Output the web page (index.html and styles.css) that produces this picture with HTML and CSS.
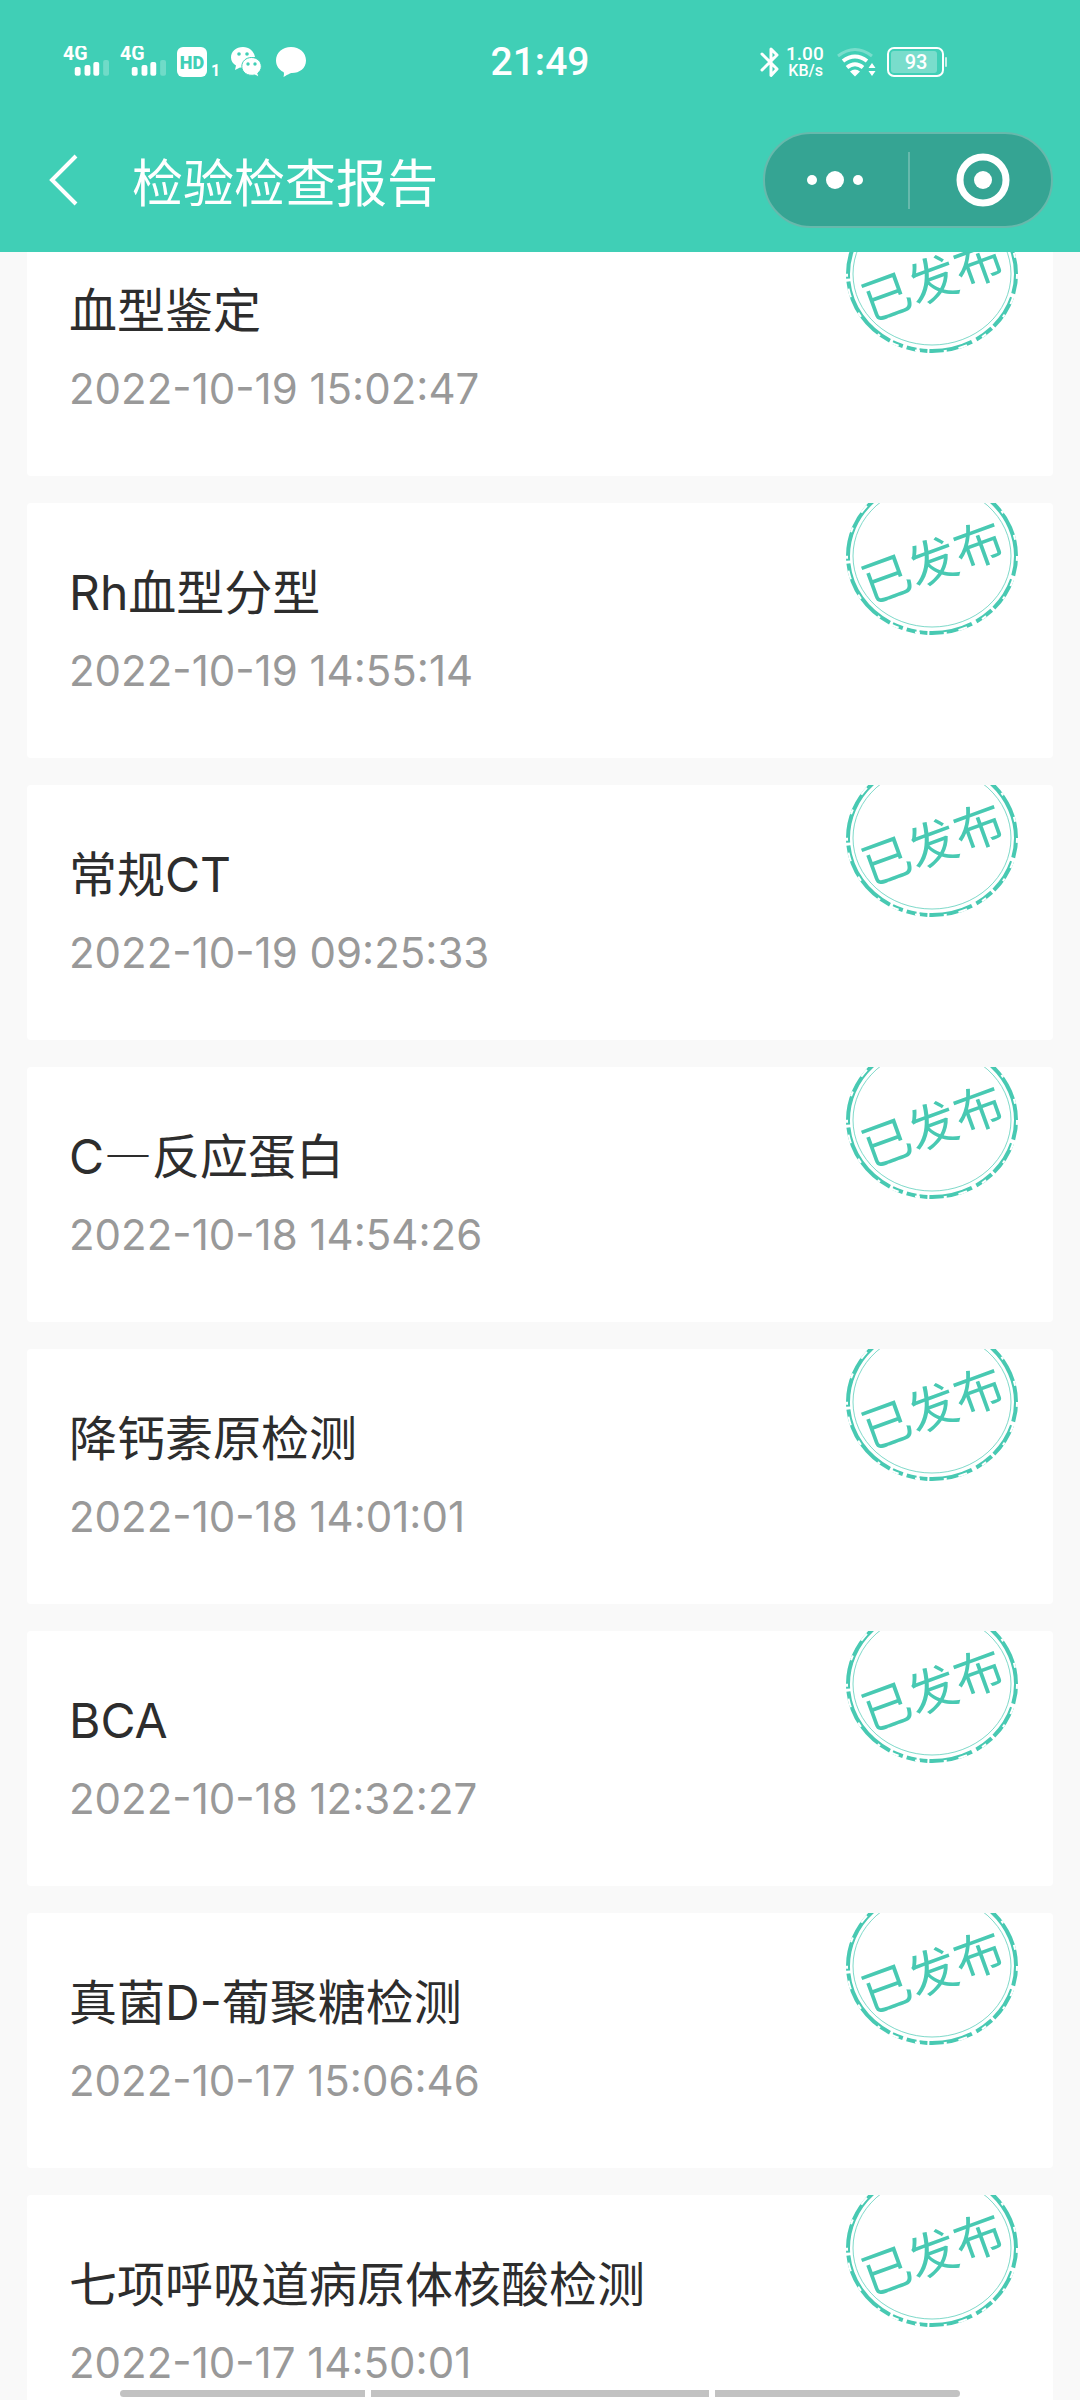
FILE: index.html
```html
<!DOCTYPE html>
<html lang="zh-CN">
<head>
<meta charset="utf-8">
<meta name="viewport" content="width=device-width">
<title>检验检查报告</title>
<link rel="stylesheet" href="styles.css">
</head>
<body>
<svg class="defs" aria-hidden="true">
  <symbol id="signal" viewBox="0 0 48 32">
    <text class="signal-text" x="0" y="14">4G</text>
    <rect x="12" y="21" width="6" height="9" rx="2"/>
    <rect x="22" y="19" width="6" height="11" rx="2"/>
    <rect x="31" y="16" width="6" height="14" rx="2"/>
    <rect x="41" y="14" width="6" height="16" rx="2" opacity=".25"/>
  </symbol>
  <symbol id="stamp" viewBox="0 0 172 160">
    <ellipse class="stamp-ring" cx="86" cy="80" rx="84" ry="77"/>
    <ellipse class="stamp-wear" cx="86" cy="80" rx="85" ry="78"/>
    <ellipse class="stamp-inner" cx="86" cy="80" rx="79" ry="71"/>
    <text class="stamp-text" x="87" y="104" transform="rotate(-20 87 87)">已发布</text>
  </symbol>
</svg>
<div class="app">
  <header class="header">
    <div class="status">
      <div class="status-left">
        <svg class="signal"><use href="#signal"/></svg>
        <svg class="signal"><use href="#signal"/></svg>
        <svg class="hd" viewBox="0 0 44 32">
          <rect x="0" y="1" width="30" height="30" rx="6"/>
          <text class="hd-text" x="15" y="23">HD</text>
          <text class="hd-num" x="34" y="30">1</text>
        </svg>
        <svg class="wechat" viewBox="0 0 35 32">
          <path d="M12 1C5 1 0 5.500 0 11.500c0 3.500 2 6.200 5 8L4 24l5-2.500 3 .5a11 10 0 0 1 12-11C23 5 18 1 12 1z"/>
          <path class="front" d="M20.500 11.500c5.500 0 9.800 3.800 9.800 9 0 3-1.500 5-3.500 6.500l1 4-4-2c-7 1.500-13-2.500-13-8.500 0-5.200 4.200-9 9.700-9z"/>
          <g class="holes"><circle cx="8" cy="8" r="1.800"/><circle cx="16" cy="8" r="1.800"/><circle cx="17" cy="18" r="1.700"/><circle cx="24" cy="18" r="1.700"/></g>
        </svg>
        <svg class="bubble" viewBox="0 0 30 32">
          <path d="M15 1c8.500 0 15 5.700 15 13.500S23.500 27 16 27c-2 0-3 1-8.500 4 .8-3 .5-4 0-5C3 24 0 19.500 0 14.500 0 6.700 6.500 1 15 1z"/>
        </svg>
      </div>
      <time class="clock">21:49</time>
      <div class="status-right">
        <svg class="bt" viewBox="0 0 18 32"><path d="M2 8 17 23 11 29.500V3L17 9 2 24"/></svg>
        <div class="speed"><span class="speed-num">1.00</span><span class="speed-unit">KB/s</span></div>
        <svg class="wifi" viewBox="0 0 42 32">
          <path class="arc faint" d="M1 10Q18 -3 35 10"/>
          <path class="arc" d="M6 15Q18 6 30 15M10 21.500Q18 15 26 21.500"/>
          <path d="M18 30.500l-5-5q5-4 10 0z"/>
          <path d="M35 17l3.500 5h-7zM35 30l3.500-5h-7z"/>
        </svg>
        <svg class="battery" viewBox="0 0 61 32">
          <rect class="shell" x="1" y="2" width="55" height="28" rx="6"/>
          <rect x="4" y="5" width="46" height="22" rx="3" opacity=".3"/>
          <rect x="58" y="11" width="2" height="10" rx="1" opacity=".7"/>
          <text class="battery-text" x="29" y="23">93</text>
        </svg>
      </div>
    </div>
    <div class="nav">
      <button class="back" aria-label="返回"><svg viewBox="0 0 30 54"><path d="M27 3 3 27 27 51"/></svg></button>
      <h1 class="nav-title">检验检查报告</h1>
      <div class="capsule">
        <button class="capsule-btn" aria-label="更多"><svg viewBox="0 0 58 54"><circle cx="6" cy="27" r="5"/><circle cx="29" cy="27" r="9"/><circle cx="52" cy="27" r="5"/></svg></button>
        <span class="divider"></span>
        <button class="capsule-btn" aria-label="关闭"><svg viewBox="0 0 58 54"><circle class="target" cx="29" cy="27" r="23"/><circle cx="29" cy="27" r="9"/></svg></button>
      </div>
    </div>
  </header>
  <main class="content">
    <ul class="list">
      <li class="card"><h2 class="name">血型鉴定</h2><time class="date">2022-10-19 15:02:47</time><svg class="stamp"><use href="#stamp"/></svg></li>
      <li class="card"><h2 class="name">Rh血型分型</h2><time class="date">2022-10-19 14:55:14</time><svg class="stamp"><use href="#stamp"/></svg></li>
      <li class="card"><h2 class="name">常规CT</h2><time class="date">2022-10-19 09:25:33</time><svg class="stamp"><use href="#stamp"/></svg></li>
      <li class="card"><h2 class="name">C<span class="dash">—</span>反应蛋白</h2><time class="date">2022-10-18 14:54:26</time><svg class="stamp"><use href="#stamp"/></svg></li>
      <li class="card"><h2 class="name">降钙素原检测</h2><time class="date">2022-10-18 14:01:01</time><svg class="stamp"><use href="#stamp"/></svg></li>
      <li class="card"><h2 class="name">BCA</h2><time class="date">2022-10-18 12:32:27</time><svg class="stamp"><use href="#stamp"/></svg></li>
      <li class="card"><h2 class="name">真菌D-葡聚糖检测</h2><time class="date">2022-10-17 15:06:46</time><svg class="stamp"><use href="#stamp"/></svg></li>
      <li class="card"><h2 class="name">七项呼吸道病原体核酸检测</h2><time class="date">2022-10-17 14:50:01</time><svg class="stamp"><use href="#stamp"/></svg></li>
    </ul>
  </main>
  <div class="gesture" aria-hidden="true"><i></i><i class="wide"></i><i></i></div>
</div>
</body>
</html>
```
FILE: styles.css
```css
* { box-sizing: border-box; }
body {
  margin: 0;
  background: #f9f9f9;
  color: #2d2d2d;
  font-family: Inter, "Noto Sans CJK SC", sans-serif;
}
h1, h2, ul { margin: 0; padding: 0; font-weight: 400; }
button { padding: 0; border: 0; background: none; color: inherit; }
svg { display: block; fill: currentColor; overflow: visible; }
.defs { display: none; }

.app {
  position: relative;
  display: flex;
  flex-direction: column;
  height: 100vh;
  overflow: hidden;
}

/* header */
.header { flex: none; background: #40cfb6; color: #fff; }
.status {
  display: grid;
  grid-template-columns: 1fr auto 1fr;
  align-items: center;
  height: 124px;
}
.status svg { height: 32px; }
.status-left { display: flex; gap: 10px; padding-left: 63px; }
.status-right { display: flex; align-items: center; justify-content: flex-end; gap: 8px; padding-right: 132px; }
.signal { width: 47px; }
.signal use { width: 48px; height: 32px; }
.signal-text { font: 700 20px Roboto, sans-serif; }
.hd { width: 44px; }
.hd-text { fill: #40cfb6; font: 900 18px Roboto, sans-serif; text-anchor: middle; }
.hd-num { font: 700 16px Roboto, sans-serif; }
.wechat { width: 35px; }
.front { stroke: #40cfb6; stroke-width: 1; }
.holes { fill: #40cfb6; }
.bubble { width: 30px; }
.clock { font: 500 39px/48px Roboto, sans-serif; }
.bt { width: 18px; fill: none; stroke: #fff; stroke-width: 3; stroke-linejoin: round; stroke-linecap: round; }
.speed { width: 43px; display: flex; flex-direction: column; padding-right: 6px; text-align: right; font-family: Roboto, sans-serif; font-weight: 500; }
.speed-num { font-size: 19px; line-height: 17px; }
.speed-unit { font-size: 16px; line-height: 17px; }
.wifi { width: 42px; }
.arc { fill: none; stroke: #fff; stroke-width: 4; }
.faint { opacity: .3; stroke-width: 3; }
.battery { width: 61px; }
.shell { fill: none; stroke: #fff; stroke-width: 2; }
.battery-text { font: 500 20px Roboto, sans-serif; text-anchor: middle; }

.nav { display: flex; align-items: center; padding: 8px 27px 24px 48px; }
.back { width: 32px; }
.back svg { width: 32px; height: 54px; fill: none; stroke: #fff; stroke-width: 4; }
.nav-title { flex: 1; padding: 8px 0 0 52px; font-size: 51px; line-height: 76px; }
.capsule {
  display: flex;
  align-items: center;
  justify-content: space-between;
  width: 290px;
  height: 96px;
  padding: 0 39px 0 41px;
  border: 2px solid #67b9ac;
  border-radius: 48px;
  background: #35a493;
}
.capsule-btn svg { width: 58px; height: 54px; }
.target { fill: none; stroke: #fff; stroke-width: 7; }
.divider { width: 2px; height: 57px; background: #67b9ac; }

/* reports: the list is scrolled a little under the header */
.content { flex: 1; min-height: 0; overflow: hidden; }
.list { display: flex; flex-direction: column; gap: 27px; margin-top: -31px; padding: 0 27px; list-style: none; }
.card {
  position: relative;
  display: flex;
  flex-direction: column;
  gap: 12px;
  padding: 54px 42px 57px;
  overflow: hidden;
  border-radius: 4px;
  background: #fff;
}
.name { font-size: 48px; line-height: 72px; }
.dash { font-family: "Noto Sans CJK SC", sans-serif; line-height: 1; }
.date { color: #999; font-size: 42px; line-height: 60px; }
.stamp { position: absolute; top: -27px; right: 35px; width: 172px; height: 160px; color: #48c9b2; }
.stamp-ring { fill: none; stroke: currentColor; stroke-width: 4; stroke-dasharray: 30 4 34 3 19 5 44 2 8 3 10 4 11 3 75 3 300; stroke-dashoffset: 10; }
.stamp-wear { fill: none; stroke: #fff; stroke-width: 2; stroke-dasharray: 5 17 9 12 3 24; }
.stamp-inner { fill: none; stroke: currentColor; stroke-width: 1; opacity: .7; }
.stamp-text { font: 400 49px "Noto Sans CJK SC", sans-serif; text-anchor: middle; }

/* system gesture bar */
.gesture { position: absolute; bottom: 3px; left: 120px; right: 120px; display: flex; gap: 6px; height: 7px; border-radius: 4px; overflow: hidden; }
.gesture i { flex: 245; background: #c2c2c2; }
.gesture .wide { flex: 338; }
```
